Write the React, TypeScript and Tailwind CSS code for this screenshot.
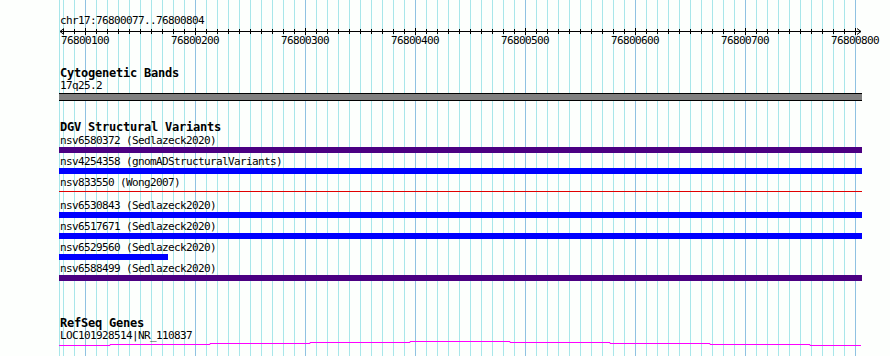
import React from "react";

const LEFT = 59;
const RIGHT = 862;

// grid: one line every 10 bp (11 px), a darker one every 100 bp
const MINOR = Array.from({ length: 73 }, (_, i) => 63 + i * 11);
const MAJOR = Array.from({ length: 8 }, (_, i) => 85 + i * 110);
const LABELS = MAJOR.map((x, i) => ({ x, text: String(76800100 + i * 100) }));

type Row = { label: string; kind: "bar" | "line"; color: string; end?: number };

const ROWS: Row[] = [
  { label: "nsv6580372 (Sedlazeck2020)", kind: "bar", color: "#4b0082" },
  { label: "nsv4254358 (gnomADStructuralVariants)", kind: "bar", color: "#0000ff" },
  { label: "nsv833550 (Wong2007)", kind: "line", color: "#e00000" },
  { label: "nsv6530843 (Sedlazeck2020)", kind: "bar", color: "#0000ff" },
  { label: "nsv6517671 (Sedlazeck2020)", kind: "bar", color: "#0000ff" },
  { label: "nsv6529560 (Sedlazeck2020)", kind: "bar", color: "#0000ff", end: 168 },
  { label: "nsv6588499 (Sedlazeck2020)", kind: "bar", color: "#4b0082" },
];

// staircase of the gene model, [x1, x2, y]
const GENE: [number, number, number][] = [
  [59, 110, 345],
  [110, 210, 344],
  [210, 310, 343],
  [310, 410, 342],
  [410, 510, 341],
  [510, 610, 342],
  [610, 710, 343],
  [710, 810, 344],
  [810, 861, 345],
];

function Grid() {
  return (
    <svg className="absolute inset-0" width={890} height={356}>
      <line x1={59.5} y1={0} x2={59.5} y2={356} stroke="#a8e6ea" />
      {MINOR.map((x) => (
        <line key={x} x1={x + 0.5} y1={0} x2={x + 0.5} y2={356} stroke="#a8e6ea" />
      ))}
      {MAJOR.map((x) => (
        <line key={x} x1={x + 0.5} y1={0} x2={x + 0.5} y2={356} stroke="#8fc2e2" />
      ))}
    </svg>
  );
}

function Ruler() {
  return (
    <svg width={830} height={20} className="-ml-[60px] block overflow-visible" viewBox="0 0 830 20">
      <line x1={60} y1={4.5} x2={861} y2={4.5} stroke="#000" />
      <polyline points="64,1.5 60,4.5 64,7.5" fill="none" stroke="#000" />
      <polyline points="857,1.5 861,4.5 857,7.5" fill="none" stroke="#000" />
      {MINOR.map((x) => (
        <line key={x} x1={x + 0.5} y1={2} x2={x + 0.5} y2={7} stroke="#000" />
      ))}
      {MAJOR.map((x) => (
        <line key={x} x1={x + 0.5} y1={1} x2={x + 0.5} y2={8} stroke="#000" />
      ))}
      {LABELS.map((l) => (
        <text
          key={l.x}
          x={l.x}
          y={17}
          textAnchor="middle"
          fontFamily="'DejaVu Sans Mono', monospace"
          fontSize={11}
          letterSpacing={-0.62}
          fill="#000"
        >
          {l.text}
        </text>
      ))}
    </svg>
  );
}

function Title({ children }: { children: React.ReactNode }) {
  return <div className="h-[13px] text-[12px] font-bold leading-[13px] tracking-[-0.22px]">{children}</div>;
}

function Label({ children }: { children: React.ReactNode }) {
  return (
    <div className="h-[12px] whitespace-nowrap text-[11px] leading-[12px] tracking-[-0.62px]">{children}</div>
  );
}

export default function App() {
  return (
    <div className="relative h-[356px] w-[890px] overflow-hidden bg-[#fdfffd] font-['DejaVu_Sans_Mono',monospace] text-black">
      <Grid />

      <div className="relative flex flex-col pl-[60px] pt-[15px]">
        <Label>chr17:76800077..76800804</Label>
        <Ruler />

        {/* Cytogenetic Bands */}
        <div className="mt-[20px]">
          <Title>Cytogenetic Bands</Title>
          <Label>17q25.2</Label>
          <div className="-ml-px mt-[1px] h-[8px] w-[803px] border-y border-black bg-[#808080]" />
        </div>

        {/* DGV */}
        <div className="mt-[20px] flex flex-col">
          <Title>DGV Structural Variants</Title>
          <div className="mt-px flex flex-col gap-[3px]">
            {ROWS.map((r) => (
              <div key={r.label}>
                <Label>{r.label}</Label>
                <div className="-ml-px h-[6px]">
                  {r.kind === "bar" ? (
                    <div
                      className="h-[6px]"
                      style={{ background: r.color, width: (r.end ?? RIGHT) - LEFT }}
                    />
                  ) : (
                    <div className="mt-[2px] h-px w-[803px]" style={{ background: r.color }} />
                  )}
                </div>
              </div>
            ))}
          </div>
        </div>

        {/* RefSeq */}
        <div className="mt-[36px]">
          <Title>RefSeq Genes</Title>
          <Label>LOC101928514|NR_110837</Label>
        </div>
      </div>

      <svg className="absolute inset-0" width={890} height={356}>
        <path
          d={GENE.map(([a, b, y], i) => `${i ? "L" : "M"}${a},${y + 0.5} L${b},${y + 0.5}`).join(" ")}
          fill="none"
          stroke="#ff00ff"
          strokeWidth={1}
        />
      </svg>
    </div>
  );
}
